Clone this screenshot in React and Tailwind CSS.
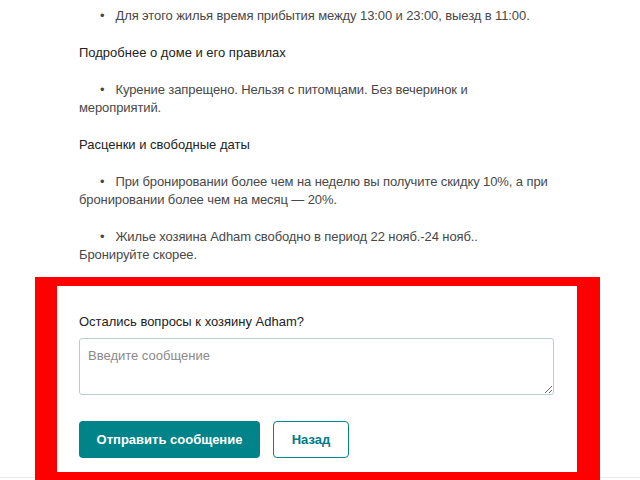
import React from 'react';

const font = { fontFamily: '"Liberation Sans", Arial, sans-serif' };

// Пункт списка с точкой в начале строки
function Bullet({ children, last }) {
    return (
        <p className={"indent-[21px] text-[13px] tracking-[-0.1px] leading-[18px] text-[#484848] " + (last ? "mb-[13px]" : "mb-[19px]")}>
            <span className="mr-[11px]">•</span>
            {children}
        </p>
    );
}

function Heading({ children }) {
    return (
        <p className="text-[13px] leading-[18px] text-[#222222] mb-[19px]">{children}</p>
    );
}

export default function App() {
    return (
        <div className="w-[640px] h-[480px] overflow-hidden bg-white" style={font}>
            <div className="pl-[79px] pr-[40px] pt-[7px]">
                <Bullet>Для этого жилья время прибытия между 13:00 и 23:00, выезд в 11:00.</Bullet>
                <Heading>Подробнее о доме и его правилах</Heading>
                <Bullet>Курение запрещено. Нельзя с питомцами. Без вечеринок и<br />мероприятий.</Bullet>
                <Heading>Расценки и свободные даты</Heading>
                <Bullet>При бронировании более чем на неделю вы получите скидку 10%, а при<br />бронировании более чем на месяц — 20%.</Bullet>
                <Bullet last>Жилье хозяина Adham свободно в период 22 нояб.-24 нояб..<br />Бронируйте скорее.</Bullet>
            </div>

            <div className="border-b border-[#ebebeb]">
                <div className="ml-[35px] w-[565px] -mb-[3px] bg-white border-[#ff0000] border-l-[22px] border-t-[9px] border-r-[23px] border-b-[8px] pl-[22px] pr-[23px] pt-[27px] pb-[14px]">
                    <p className="text-[13px] leading-[18px] text-[#222222]">Остались вопросы к хозяину Adham?</p>
                    <textarea
                        className="mt-[7px] block w-[475px] h-[57px] rounded-[3px] border border-[#b9cfcf] px-[8px] py-[8px] text-[13px] leading-[18px] text-[#484848] placeholder:text-[#8a8a8a] outline-none resize-y"
                        placeholder="Введите сообщение"
                    />
                    <div className="flex gap-[13px] mt-[26px]">
                        <button className="h-[37px] w-[181px] rounded-[4px] bg-[#008489] text-white text-[13px] font-bold">Отправить сообщение</button>
                        <button className="h-[37px] w-[76px] rounded-[4px] border border-[#008489] bg-white text-[#007a87] text-[13px] font-bold">Назад</button>
                    </div>
                </div>
            </div>
        </div>
    );
}
